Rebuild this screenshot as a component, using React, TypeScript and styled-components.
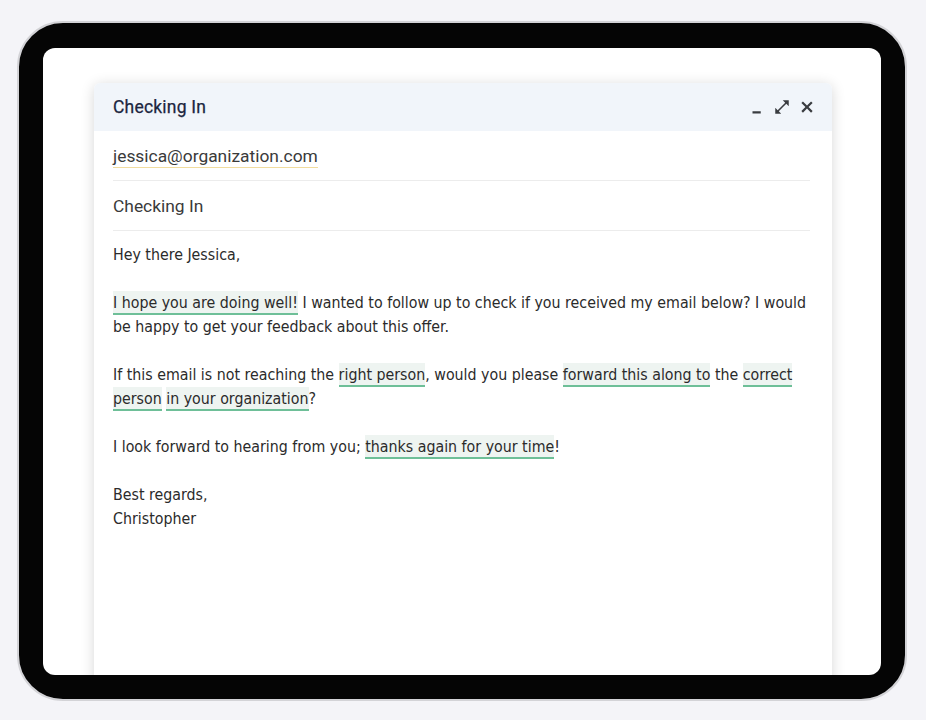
import React from "react";
import styled, { createGlobalStyle } from "styled-components";

const Global = createGlobalStyle`
  html, body { margin: 0; padding: 0; background: #f4f4f8; }
  body { width: 926px; height: 720px; overflow: hidden; }
`;

const Page = styled.div`
  width: 926px;
  height: 720px;
  padding: 21px 0 0 17px;
  box-sizing: border-box;
`;

const Device = styled.div`
  width: 890px;
  height: 680px;
  box-sizing: border-box;
  border: 2px solid #d3d3d7;
  border-radius: 46px;
  background: #050505;
  padding: 25px 24px 24px 24px;
`;

const Screen = styled.div`
  height: 100%;
  background: #ffffff;
  border-radius: 12px;
  overflow: hidden;
  padding: 35px 48px 0 51px;
  box-sizing: border-box;
`;

const Compose = styled.div`
  width: 738px;
  height: 700px;
  background: #fff;
  box-shadow: 0 2px 14px rgba(0, 0, 0, 0.16);
  border-radius: 6px 6px 0 0;
  display: flex;
  flex-direction: column;
`;

const Header = styled.div`
  height: 48px;
  background: #f1f5fa;
  display: flex;
  align-items: center;
  padding: 0 16px 0 19px;
  border-radius: 6px 6px 0 0;
`;

const Title = styled.div`
  flex: 1;
  font-family: Roboto, "Noto Sans", sans-serif;
  font-size: 17.5px;
  font-weight: 400;
  color: #1c2640;
  letter-spacing: 0.2px;
  -webkit-text-stroke: 0.25px #1c2640;
`;

const Controls = styled.div`
  display: flex;
  align-items: center;
  gap: 7px;
  color: #3a3c40;
`;

const IconBtn = styled.span`
  width: 18px;
  height: 18px;
  display: inline-flex;
  align-items: center;
  justify-content: center;
  svg { width: 18px; height: 18px; fill: currentColor; }
`;

const Body = styled.div`
  padding: 0 22px 0 19px;
  display: flex;
  flex-direction: column;
`;

const Field = styled.div`
  height: 49px;
  display: flex;
  align-items: center;
  border-bottom: 1px solid #ececec;
  font-family: Roboto, "Noto Sans", sans-serif;
  font-size: 17.4px;
  color: #3a3a3a;
`;

const Recipient = styled.span`
  border-bottom: 1px solid #f1dc9e;
  padding-bottom: 1px;
  margin-top: 2px;
`;

const Text = styled.div`
  padding-top: 12px;
  font-family: "DejaVu Sans Condensed", Tahoma, sans-serif;
  font-size: 15.8px;
  line-height: 24px;
  color: #2b2b2b;
`;

const Para = styled.p`
  margin: 0 0 24px 0;
`;

const Mark = styled.span`
  background: #eef4f1;
  border-bottom: 2px solid #6ebf98;
  padding: 2px 0 1px;
`;

const Minimize = () => (
  <svg viewBox="0 0 24 24"><path d="M6 17.5h11v3H6z" /></svg>
);
const Expand = () => (
  <svg viewBox="0 0 24 24"><path d="M21 11V3h-8l3.29 3.29-10 10L3 13v8h8l-3.29-3.29 10-10z" /></svg>
);
const Close = () => (
  <svg viewBox="0 0 24 24"><path d="M19.5 6.6L17.4 4.5 12 9.9 6.6 4.5 4.5 6.6 9.9 12 4.5 17.4 6.6 19.5 12 14.1 17.4 19.5 19.5 17.4 14.1 12z" /></svg>
);

export default function App() {
  return (
    <>
      <Global />
      <Page>
        <Device>
          <Screen>
            <Compose>
              <Header>
                <Title>Checking In</Title>
                <Controls>
                  <IconBtn><Minimize /></IconBtn>
                  <IconBtn><Expand /></IconBtn>
                  <IconBtn><Close /></IconBtn>
                </Controls>
              </Header>
              <Body>
                <Field><Recipient>jessica@organization.com</Recipient></Field>
                <Field>Checking In</Field>
                <Text>
                  <Para>Hey there Jessica,</Para>
                  <Para>
                    <Mark>I hope you are doing well!</Mark> I wanted to follow up to check if you received my email below? I would be happy to get your feedback about this offer.
                  </Para>
                  <Para>
                    If this email is not reaching the <Mark>right person</Mark>, would you please <Mark>forward this along to</Mark> the <Mark>correct person</Mark> <Mark>in your organization</Mark>?
                  </Para>
                  <Para>
                    I look forward to hearing from you; <Mark>thanks again for your time</Mark>!
                  </Para>
                  <Para>
                    Best regards,
                    <br />
                    Christopher
                  </Para>
                </Text>
              </Body>
            </Compose>
          </Screen>
        </Device>
      </Page>
    </>
  );
}
